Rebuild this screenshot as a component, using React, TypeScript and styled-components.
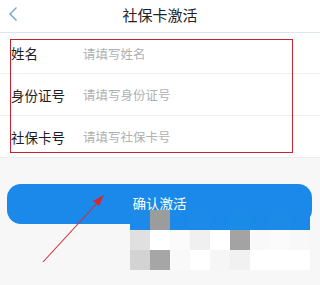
import * as React from 'react';
import {FC} from 'react';
import styled, {createGlobalStyle} from 'styled-components';

const GlobalStyle = createGlobalStyle`
    html, body {
        margin: 0;
        padding: 0;
        background: #f7f7f7;
        font-family: "Noto Sans CJK SC", "Noto Sans", sans-serif;
    }
`;

const fields = [
    {label: '姓名', placeholder: '请填写姓名'},
    {label: '身份证号', placeholder: '请填写身份证号'},
    {label: '社保卡号', placeholder: '请填写社保卡号'},
];

// pixelated patch over the bottom of the screenshot
const mosaic = [
    ['#1b8ae8', '#9c9c9c', '#1a89e9', '#1b8ae8', '#1a89e9', '#1b8be8', '#1a89e8', '#1c8ae7', '#1b89e8'],
    ['#e0e0e0', '#ffffff', '#fbfbfb', '#f0f0f0', '#ffffff', '#a3a3a3', '#f9f9f9', '#fbfbfb', '#f8f8f8'],
    ['#d3d3d3', '#a6a6a6', '#f9f9f9', '#ffffff', '#f6f6f6', '#f1f1f1', '#ffffff', '#ffffff', '#ffffff'],
];

export const App: FC = () => {
    return <Page>
        <GlobalStyle/>
        <Header>
            <BackButton>
                <svg width="10" height="16" viewBox="0 0 10 16">
                    <path d="M8.5 1.5 L2 8 L8.5 14.5" fill="none" stroke="#6aa6dc" strokeWidth="1.4"/>
                </svg>
            </BackButton>
            <Title>社保卡激活</Title>
        </Header>
        <Form>
            {fields.map(f => <Row key={f.label}>
                <Label>{f.label}</Label>
                <Placeholder>{f.placeholder}</Placeholder>
            </Row>)}
        </Form>
        <ButtonArea>
            <ConfirmButton>确认激活</ConfirmButton>
        </ButtonArea>

        <Highlight/>
        <Mosaic>
            {mosaic.flat().map((c, i) => <Tile key={i} $color={c}/>)}
        </Mosaic>
        <Arrow width="320" height="285" viewBox="0 0 320 285">
            <line x1="43" y1="262" x2="99" y2="201" stroke="#d42a35" strokeWidth="1.1"/>
            <polygon points="104,195 93,201 99,206" fill="#d42a35"/>
        </Arrow>
    </Page>
}

export default App;

const Page = styled.div`
    position: relative;
    width: 320px;
    height: 285px;
    overflow: hidden;
    background: #f7f7f7;
`;

const Header = styled.div`
    position: relative;
    height: 32px;
    display: flex;
    align-items: center;
    justify-content: center;
    background: #fff;
    border-bottom: 1px solid #dfe5ec;
`;

const BackButton = styled.div`
    position: absolute;
    left: 8px;
    top: 6px;
    display: flex;
`;

const Title = styled.div`
    font-size: 15px;
    color: #222;
    margin-top: -3px;
`;

const Form = styled.div`
    background: #fff;
    border-bottom: 1px solid #ececec;
`;

const Row = styled.div`
    height: 41px;
    display: flex;
    align-items: center;
    padding-left: 11px;
    border-bottom: 1px solid #efefef;

    &:first-child {
        height: 40px;
    }
    &:last-child {
        border-bottom: none;
    }
`;

const Label = styled.div`
    width: 72px;
    font-size: 13.5px;
    color: #1e1e1e;
`;

const Placeholder = styled.div`
    font-size: 12.5px;
    color: #b0b0b0;
`;

const ButtonArea = styled.div`
    padding: 26px 8px 0 7px;
`;

const ConfirmButton = styled.div`
    height: 40px;
    border-radius: 14px;
    background: #1a89e9;
    color: #fff;
    font-size: 13.5px;
    display: flex;
    align-items: center;
    justify-content: center;
    padding-bottom: 2px;
    box-sizing: border-box;
`;

const Highlight = styled.div`
    position: absolute;
    left: 10px;
    top: 39px;
    width: 281px;
    height: 112px;
    border: 1px solid #c8212f;
`;

const Mosaic = styled.div`
    position: absolute;
    left: 130px;
    top: 210px;
    display: grid;
    grid-template-columns: repeat(9, 20px);
    grid-auto-rows: 20px;
`;

const Tile = styled.div<{ $color: string }>`
    background: ${p => p.$color};
`;

const Arrow = styled.svg`
    position: absolute;
    left: 0;
    top: 0;
`;
